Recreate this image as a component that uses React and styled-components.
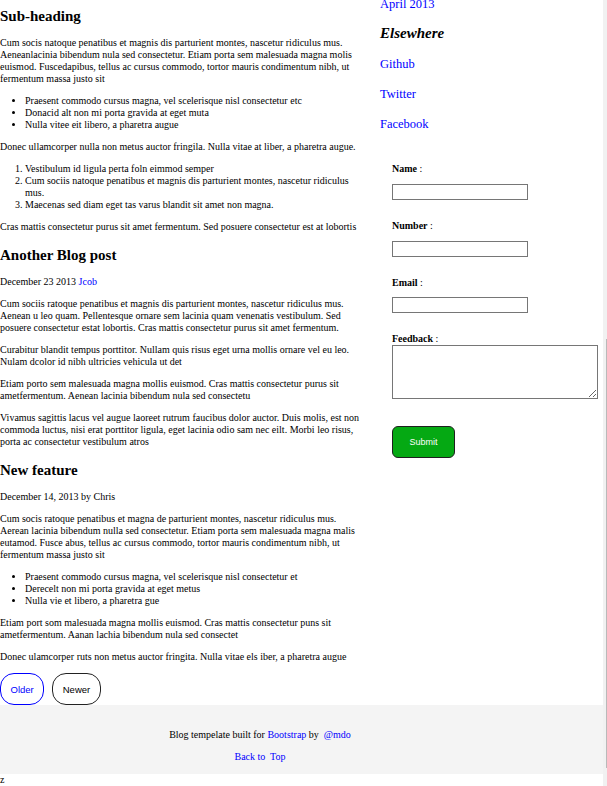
import React from "react";
import styled, { createGlobalStyle } from "styled-components";

const GlobalStyle = createGlobalStyle`
  html, body {
    margin: 0;
    padding: 0;
    overflow: hidden;
    background: #fff;
  }
  body {
    font-family: "Liberation Serif", "Times New Roman", serif;
    font-size: 10px;
    line-height: 1.2;
    color: #000;
  }
`;

const Layout = styled.div`
  display: flex;
  align-items: flex-start;
`;

const Main = styled.main`
  width: 366px;
  flex: none;
`;

const PostTitle = styled.h2`
  font-size: 15px;
  font-weight: bold;
  margin: ${(p) => (p.$first ? "7px" : "12.45px")} 0 12.45px;
`;

const Text = styled.p`
  margin: 10px 0;
`;

const BulletList = styled.ul`
  margin: 10px 0;
  padding-left: 25px;
`;

const NumberList = styled.ol`
  margin: 10px 0;
  padding-left: 25px;
`;

const Link = styled.a`
  color: #0000ff;
  text-decoration: none;
  cursor: pointer;
`;

const Pager = styled.nav`
  display: flex;
  gap: 8px;
`;

const PagerButton = styled.button`
  height: 32px;
  padding: 0 9.5px;
  border-radius: 14px;
  border: 1px solid ${(p) => (p.$active ? "#0000ff" : "#222")};
  color: ${(p) => (p.$active ? "#0000ff" : "#000")};
  background: #fff;
  font-family: "Liberation Sans", Arial, sans-serif;
  font-size: 9.5px;
  cursor: pointer;
`;

const Sidebar = styled.aside`
  margin-left: 14px;
  flex: 1;
  display: flex;
  flex-direction: column;
  align-items: flex-start;
`;

const SideLink = styled(Link)`
  display: block;
  font-size: 12.5px;
  line-height: 15px;
  margin-top: ${(p) => p.$top || "15px"};
`;

const SideHeading = styled.h4`
  font-size: 15px;
  line-height: 18px;
  font-weight: bold;
  font-style: italic;
  margin: 12.4px 0 0;
`;

const FeedbackForm = styled.form`
  margin-top: 31px;
  padding-left: 12px;
  display: flex;
  flex-direction: column;
  align-items: flex-start;
`;

const Field = styled.div`
  display: flex;
  flex-direction: column;
  align-items: flex-start;
  margin-bottom: ${(p) => p.$gap || "20px"};
`;

const FieldLabel = styled.label`
  line-height: 12px;
  margin-bottom: ${(p) => (p.$tight ? "0" : "8.6px")};

  b {
    font-weight: bold;
  }
`;

const TextInput = styled.input`
  box-sizing: border-box;
  width: 136px;
  height: 16px;
  margin: 0;
  padding: 1px 2px;
  border: 1px solid #767676;
  border-radius: 0;
  font-size: 10px;
`;

const TextArea = styled.textarea`
  box-sizing: border-box;
  width: 206px;
  height: 54px;
  margin: 0;
  padding: 2px;
  border: 1px solid #767676;
  border-radius: 0;
  font-size: 10px;
`;

const SubmitButton = styled.button`
  width: 63px;
  height: 32px;
  border: 1px solid #1f1f1f;
  border-radius: 6px;
  background: #05a913;
  color: #fff;
  font-family: "Liberation Sans", Arial, sans-serif;
  font-size: 9px;
  cursor: pointer;
`;

const Footer = styled.footer`
  background: #f4f4f4;
  padding: 24px 87px 11px 0;
  text-align: center;
`;

const FooterLine = styled.p`
  margin: ${(p) => (p.$second ? "10px" : "0")} 0 0;
`;

const Trailer = styled.div`
  line-height: 12px;
`;

const ScrollTrack = styled.div`
  position: fixed;
  top: 0;
  right: 0;
  width: 4px;
  height: 100%;
  background: #f1f1f1;
`;

const ScrollThumb = styled.div`
  position: absolute;
  top: 339px;
  right: 0;
  width: 1.5px;
  height: 429px;
  background: #b9b9b9;
`;

const posts = [
  {
    title: "Sub-heading",
    blocks: [
      {
        type: "p",
        text: "Cum socis natoque penatibus et magnis dis parturient montes, nascetur ridiculus mus. Aeneanlacinia bibendum nula sed consectetur. Etiam porta sem malesuada magna molis euismod. Fuscedapibus, tellus ac cursus commodo, tortor mauris condimentum nibh, ut fermentum massa justo sit",
      },
      {
        type: "ul",
        items: [
          "Praesent commodo cursus magna, vel scelerisque nisl consectetur etc",
          "Donacid alt non mi porta gravida at eget muta",
          "Nulla vitee eit libero, a pharetra augue",
        ],
      },
      {
        type: "p",
        text: "Donec ullamcorper nulla non metus auctor fringila. Nulla vitae at liber, a pharetra augue.",
      },
      {
        type: "ol",
        items: [
          "Vestibulum id ligula perta foln eimmod semper",
          "Cum sociis natoque penatibus et magnis dis parturient montes, nascetur ridiculus mus.",
          "Maecenas sed diam eget tas varus blandit sit amet non magna.",
        ],
      },
      {
        type: "p",
        text: "Cras mattis consectetur purus sit amet fermentum. Sed posuere consectetur est at lobortis",
      },
    ],
  },
  {
    title: "Another Blog post",
    meta: (
      <>
        December 23 2013 <Link>Jcob</Link>
      </>
    ),
    blocks: [
      {
        type: "p",
        text: "Cum sociis ratoque penatibus et magnis dis parturient montes, nascetur ridiculus mus. Aenean u leo quam. Pellentesque ornare sem lacinia quam venenatis vestibulum. Sed posuere consectetur estat lobortis. Cras mattis consectetur purus sit amet fermentum.",
      },
      {
        type: "p",
        text: "Curabitur blandit tempus porttitor. Nullam quis risus eget urna mollis ornare vel eu leo. Nulam dcolor id nibh ultricies vehicula ut det",
      },
      {
        type: "p",
        text: "Etiam porto sem malesuada magna mollis euismod. Cras mattis consectetur purus sit ametfermentum. Aenean lacinia bibendum nula sed consectetu",
      },
      {
        type: "p",
        text: "Vivamus sagittis lacus vel augue laoreet rutrum faucibus dolor auctor. Duis molis, est non commoda luctus, nisi erat porttitor ligula, eget lacinia odio sam nec eilt. Morbi leo risus, porta ac consectetur vestibulum atros",
      },
    ],
  },
  {
    title: "New feature",
    meta: "December 14, 2013 by Chris",
    blocks: [
      {
        type: "p",
        text: "Cum socis ratoque penatibus et magna de parturient montes, nascetur ridiculus mus. Aerean lacinia bibendum nulla sed consectetur. Etiam porta sem malesuada magna malis eutamod. Fusce abus, tellus ac cursus commodo, tortor mauris condimentum nibh, ut fermentum massa justo sit",
      },
      {
        type: "ul",
        items: [
          "Praesent commodo cursus magna, vel scelerisque nisl consectetur et",
          "Derecelt non mi porta gravida at eget metus",
          "Nulla vie et libero, a pharetra gue",
        ],
      },
      {
        type: "p",
        text: "Etiam port som malesuada magna mollis euismod. Cras mattis consectetur puns sit ametfermentum. Aanan lachia bibendum nula sed consectet",
      },
      {
        type: "p",
        text: "Donec ulamcorper ruts non metus auctor fringita. Nulla vitae els iber, a pharetra augue",
      },
    ],
  },
];

const Block = ({ block }) => {
  if (block.type === "ul") {
    return (
      <BulletList>
        {block.items.map((item) => (
          <li key={item}>{item}</li>
        ))}
      </BulletList>
    );
  }
  if (block.type === "ol") {
    return (
      <NumberList>
        {block.items.map((item) => (
          <li key={item}>{item}</li>
        ))}
      </NumberList>
    );
  }
  return <Text>{block.text}</Text>;
};

const fields = [
  { id: "name", label: "Name" },
  { id: "number", label: "Number" },
  { id: "email", label: "Email" },
];

export default function App() {
  return (
    <>
      <GlobalStyle />
      <Layout>
        <Main>
          {posts.map((post, i) => (
            <article key={post.title}>
              <PostTitle $first={i === 0}>{post.title}</PostTitle>
              {post.meta && <Text>{post.meta}</Text>}
              {post.blocks.map((block, j) => (
                <Block key={j} block={block} />
              ))}
            </article>
          ))}
          <Pager>
            <PagerButton $active>Older</PagerButton>
            <PagerButton>Newer</PagerButton>
          </Pager>
        </Main>

        <Sidebar>
          <SideLink $top="-3px">April 2013</SideLink>
          <SideHeading>Elsewhere</SideHeading>
          <SideLink>Github</SideLink>
          <SideLink>Twitter</SideLink>
          <SideLink>Facebook</SideLink>

          <FeedbackForm onSubmit={(e) => e.preventDefault()}>
            {fields.map((f) => (
              <Field key={f.id}>
                <FieldLabel htmlFor={f.id}>
                  <b>{f.label}</b> :
                </FieldLabel>
                <TextInput id={f.id} type="text" />
              </Field>
            ))}
            <Field $gap="27px">
              <FieldLabel htmlFor="feedback" $tight>
                <b>Feedback</b> :
              </FieldLabel>
              <TextArea id="feedback" />
            </Field>
            <SubmitButton type="submit">Submit</SubmitButton>
          </FeedbackForm>
        </Sidebar>
      </Layout>

      <Footer>
        <FooterLine>
          Blog tempelate built for <Link>Bootstrap</Link> by&nbsp; <Link>@mdo</Link>
        </FooterLine>
        <FooterLine $second>
          <Link>Back to&nbsp; Top</Link>
        </FooterLine>
      </Footer>
      <Trailer>z</Trailer>

      <ScrollTrack>
        <ScrollThumb />
      </ScrollTrack>
    </>
  );
}
